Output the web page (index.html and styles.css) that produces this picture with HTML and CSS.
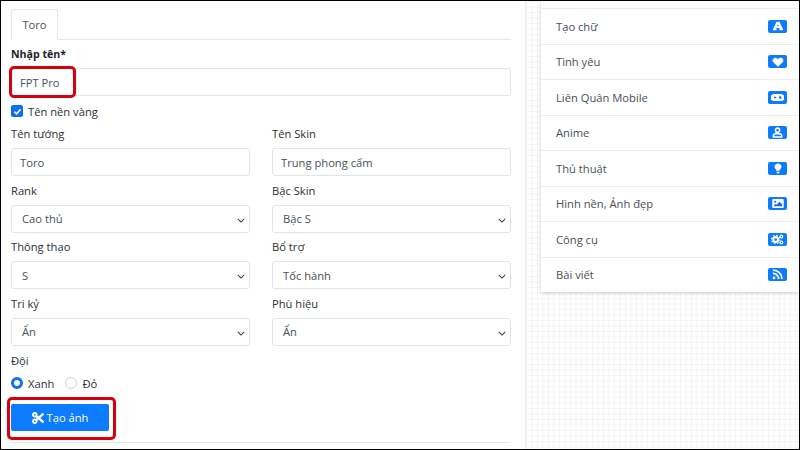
FILE: index.html
```html
<!DOCTYPE html>
<html lang="vi">
<head>
<meta charset="utf-8">
<title>Tạo ảnh</title>
<link rel="stylesheet" href="styles.css">
</head>
<body>
<div class="page">
  <main class="panel">
    <div class="tabs"><div class="tab">Toro</div></div>
    <label class="label-strong">Nhập tên*</label>
    <div class="highlight-wrap">
      <input class="control" value="FPT Pro">
      <span class="highlight hl-name"></span>
    </div>
    <div class="check-row">
      <span class="checkbox"><svg viewBox="0 0 12 12" width="11" height="11"><path d="M2.6 6.2 5 8.5 9.4 3.6" fill="none" stroke="#fff" stroke-width="1.8"/></svg></span>
      <span>Tên nền vàng</span>
    </div>
    <div class="fields">
      <div class="field"><label>Tên tướng</label><input class="control" value="Toro"></div>
      <div class="field"><label>Tên Skin</label><input class="control" value="Trung phong cấm"></div>
      <div class="field"><label>Rank</label><div class="control select">Cao thủ<svg class="chev" viewBox="0 0 10 6" width="8" height="5"><path d="M1 1l4 4 4-4" fill="none" stroke="#343a40" stroke-width="1.3"/></svg></div></div>
      <div class="field"><label>Bậc Skin</label><div class="control select">Bậc S<svg class="chev" viewBox="0 0 10 6" width="8" height="5"><path d="M1 1l4 4 4-4" fill="none" stroke="#343a40" stroke-width="1.3"/></svg></div></div>
      <div class="field"><label>Thông thạo</label><div class="control select">S<svg class="chev" viewBox="0 0 10 6" width="8" height="5"><path d="M1 1l4 4 4-4" fill="none" stroke="#343a40" stroke-width="1.3"/></svg></div></div>
      <div class="field"><label>Bổ trợ</label><div class="control select">Tốc hành<svg class="chev" viewBox="0 0 10 6" width="8" height="5"><path d="M1 1l4 4 4-4" fill="none" stroke="#343a40" stroke-width="1.3"/></svg></div></div>
      <div class="field"><label>Tri kỷ</label><div class="control select">Ẩn<svg class="chev" viewBox="0 0 10 6" width="8" height="5"><path d="M1 1l4 4 4-4" fill="none" stroke="#343a40" stroke-width="1.3"/></svg></div></div>
      <div class="field"><label>Phù hiệu</label><div class="control select">Ẩn<svg class="chev" viewBox="0 0 10 6" width="8" height="5"><path d="M1 1l4 4 4-4" fill="none" stroke="#343a40" stroke-width="1.3"/></svg></div></div>
    </div>
    <div class="team-label">Đội</div>
    <div class="radio-row">
      <span class="radio on"></span><span class="radio-text">Xanh</span>
      <span class="radio"></span><span>Đỏ</span>
    </div>
    <div class="highlight-wrap btn-wrap">
      <button class="btn">
        <svg viewBox="0 0 14 14" width="12" height="12"><circle cx="3.2" cy="3.2" r="2.1" fill="none" stroke="#fff" stroke-width="2.2"/><circle cx="3.2" cy="10.8" r="2.1" fill="none" stroke="#fff" stroke-width="2.2"/><path d="M4.8 4.6 13.4 12M4.8 9.4 13.4 2" stroke="#fff" stroke-width="2.8"/></svg>
        Tạo ảnh
      </button>
      <span class="highlight hl-btn"></span>
    </div>
    <div class="rule"></div>
  </main>
  <aside class="side">
    <nav class="card">
      <div class="card-top"></div>
      <a class="item">Tạo chữ<span class="badge"><svg viewBox="0 0 14 12" width="12" height="10"><path d="M5.3 1h3.4L13 10v1H8.6v-1.2l.6-.2-.5-1.3H5.3l-.5 1.3.6.2V11H1v-1zM6 6.3h2L7 3.6z" fill="#fff" fill-rule="evenodd"/></svg></span></a>
      <a class="item">Tình yêu<span class="badge"><svg viewBox="0 0 14 12" width="12" height="10"><path d="M7 11.6 1.4 6.2C-.2 4.4.5 1.2 3.4.8 5 .6 6.2 1.4 7 2.6 7.8 1.4 9 .6 10.6.8c2.900.4 3.600 3.600 2 5.400z" fill="#fff"/></svg></span></a>
      <a class="item">Liên Quân Mobile<span class="badge"><svg viewBox="0 0 14 10" width="13" height="9"><path d="M3.500 1h7a3.500 3.500 0 0 1 0 8h-7a3.500 3.500 0 0 1 0-8z" fill="#fff"/><circle cx="10" cy="5" r="1.500" fill="#0d6efd"/><path d="M3 4.200h2.500v1.600H3z" fill="#0d6efd"/></svg></span></a>
      <a class="item">Anime<span class="badge"><svg viewBox="0 0 12 12" width="11" height="11"><circle cx="6" cy="3.500" r="2.300" fill="none" stroke="#fff" stroke-width="1.700"/><path d="M1.500 11V9.500C1.500 8 3 7.300 4 7.300h4c1 0 2.500.7 2.500 2.200V11z" fill="none" stroke="#fff" stroke-width="1.700"/></svg></span></a>
      <a class="item">Thủ thuật<span class="badge"><svg viewBox="0 0 10 14" width="8" height="11"><path d="M5 .5a4.300 4.300 0 0 1 2.800 7.600C7.200 8.700 7 9.200 7 10H3c0-.8-.2-1.300-.8-1.900A4.300 4.300 0 0 1 5 .5z" fill="#fff"/><path d="M3.300 11h3.400v1.200L5.800 13.500H4.200L3.300 12.200z" fill="#fff"/></svg></span></a>
      <a class="item">Hình nền, Ảnh đẹp<span class="badge"><svg viewBox="0 0 14 11" width="12" height="9"><path d="M1 0h12a1 1 0 0 1 1 1v9a1 1 0 0 1-1 1H1a1 1 0 0 1-1-1V1a1 1 0 0 1 1-1z" fill="#fff"/><circle cx="3.500" cy="3.300" r="1.200" fill="#0d6efd"/><path d="M2 9V7.500l2-1.500 1.300 1L9 3.500l3 3V9z" fill="#0d6efd"/></svg></span></a>
      <a class="item">Công cụ<span class="badge"><svg viewBox="0 0 14 12" width="13" height="11"><circle cx="5" cy="6" r="2.700" fill="none" stroke="#fff" stroke-width="2.400"/><circle cx="5" cy="6" r="4.600" fill="none" stroke="#fff" stroke-width="1.100" stroke-dasharray="1.800 1.800"/><circle cx="11.200" cy="2.800" r="1.500" fill="none" stroke="#fff" stroke-width="1.300"/><circle cx="11.200" cy="9.200" r="1.500" fill="none" stroke="#fff" stroke-width="1.300"/></svg></span></a>
      <a class="item">Bài viết<span class="badge"><svg viewBox="0 0 12 12" width="11" height="11"><circle cx="2.200" cy="9.800" r="1.500" fill="#fff"/><path d="M1 4.800a6.200 6.200 0 0 1 6.200 6.200M1 1.200A9.800 9.800 0 0 1 10.800 11" fill="none" stroke="#fff" stroke-width="1.900"/></svg></span></a>
    </nav>
  </aside>
</div>
</body>
</html>
```
FILE: styles.css
```css
* { box-sizing: border-box; }
html, body { margin: 0; height: 100%; }
body {
  font-family: "Open Sans", "Noto Sans", sans-serif;
  font-size: 11.2px;
  color: #2b3035;
  background: #fff;
}
.page {
  width: 800px;
  height: 450px;
  border: 1px solid #000;
  display: grid;
  grid-template-columns: 525px 1fr;
  overflow: hidden;
}
.panel {
  padding: 8px 14px 0 10px;
  background: #fff;
  border-right: 1px solid #ececec;
}
.tabs { border-bottom: 1px solid #e4e7ea; height: 31px; display: flex; }
.tab {
  width: 47px;
  height: 31px;
  border: 1px solid #e4e7ea;
  border-bottom-color: #fff;
  border-radius: 3px 3px 0 0;
  display: flex;
  align-items: center;
  justify-content: center;
  color: #495057;
}
.label-strong { display: block; font-weight: 700; font-size: 10.6px; margin-top: 5px; height: 23px; line-height: 19px; color: #212529; }
.control {
  display: block;
  width: 100%;
  height: 28px;
  border: 1px solid #e2e5e8;
  border-radius: 3px;
  padding: 0 8px;
  font: inherit;
  color: #495057;
  background: #fff;
  outline: none;
}
.select {
  position: relative;
  display: flex;
  align-items: center;
  padding-left: 10px;
}
.chev { position: absolute; right: 4px; top: 12px; }
.highlight-wrap { position: relative; }
.highlight { position: absolute; border: 3px solid #d7000f; border-radius: 5px; pointer-events: none; }
.hl-name { left: -2px; top: -2px; width: 67px; height: 32px; }
.hl-btn { left: -4px; top: -7px; width: 109px; height: 43px; }
.check-row { display: flex; align-items: center; gap: 5px; height: 16px; margin-top: 7px; }
.checkbox {
  width: 12px;
  height: 12px;
  background: #0d6efd;
  border-radius: 2px;
  display: flex;
  align-items: center;
  justify-content: center;
}
.fields {
  display: grid;
  grid-template-columns: 239px 239px;
  column-gap: 22px;
  row-gap: 0;
  margin-top: 6px;
}
.field { height: 56.5px; }
.field label { display: block; height: 23px; line-height: 16px; padding-top: 1px; }
.team-label { height: 16px; line-height: 16px; margin-top: 2px; }
.radio-row { display: flex; align-items: center; height: 16px; margin-top: 6px; gap: 5px; }
.radio-text { margin-right: 6px; }
.radio {
  width: 12px;
  height: 12px;
  border-radius: 50%;
  border: 1px solid #cfd3d7;
  background: #fff;
}
.radio.on { border: 3.5px solid #0d6efd; }
.btn-wrap { margin-top: 13px; width: 98px; }
.btn {
  width: 98px;
  height: 27px;
  background: #0d7bfd;
  border: 0;
  border-radius: 2px;
  color: #fff;
  font: inherit;
  display: flex;
  align-items: center;
  justify-content: center;
  gap: 3px;
}
.rule { border-top: 1px solid #e4e7ea; margin-top: 11px; }
.side {
  padding: 0 0 0 15px;
  background-color: #fff;
  background-image:
    linear-gradient(#f3f3f3 1px, transparent 1px),
    linear-gradient(90deg, #f3f3f3 1px, transparent 1px);
  background-size: 5.500px 5.500px;
}
.card {
  background: #fff;
  box-shadow: 0 1px 4px rgba(0,0,0,.18);
  height: 291px;
  display: flex;
  flex-direction: column;
}
.card-top { height: 8px; flex: none; border-bottom: 1px solid #ececec; }
.item {
  flex: 1;
  display: flex;
  align-items: center;
  justify-content: space-between;
  padding: 0 12px 0 15px;
  color: #495057;
  border-bottom: 1px solid #ececec;
}
.item:last-child { border-bottom: 0; }
.badge {
  width: 19px;
  height: 13px;
  background: #0d7bfd;
  border-radius: 2px;
  display: flex;
  align-items: center;
  justify-content: center;
}
```
